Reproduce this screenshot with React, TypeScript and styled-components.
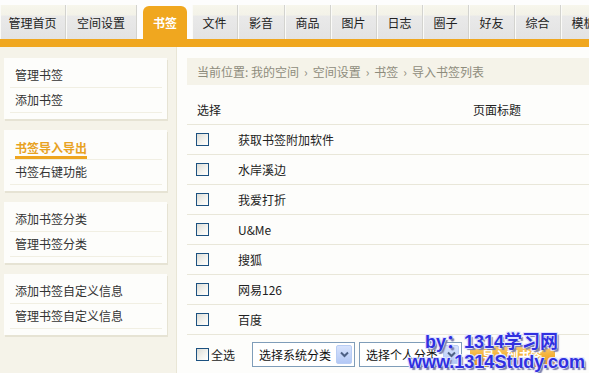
import React from "react";
import styled, { createGlobalStyle } from "styled-components";

const GlobalStyle = createGlobalStyle`
  html, body { margin: 0; padding: 0; background: #fdfdfb; }
  body {
    font-family: "Noto Sans CJK SC", "Liberation Sans", sans-serif;
    font-size: 12px;
    color: #333;
  }
  * { box-sizing: border-box; }
`;

const Page = styled.div`
  position: relative;
  width: 589px;
  height: 373px;
  overflow: hidden;
  background: #fdfdfb;
`;

const TopNav = styled.div`
  background: #fdfdfd;
  padding-top: 5px;
`;

const TabRow = styled.div`
  display: flex;
  height: 34px;
  align-items: flex-end;
`;

const Tab = styled.div<{ $w: number; $active?: boolean; $gapAfter?: number }>`
  flex: none;
  width: ${(p) => p.$w}px;
  height: ${(p) => (p.$active ? 33 : 34)}px;
  margin-right: ${(p) => p.$gapAfter ?? 0}px;
  display: flex;
  align-items: center;
  justify-content: center;
  font-size: 12px;
  line-height: 1;
  padding-top: 1px;
  color: ${(p) => (p.$active ? "#fff" : "#222")};
  font-weight: ${(p) => (p.$active ? 700 : 400)};
  white-space: nowrap;
  background: ${(p) =>
    p.$active
      ? "#f0a71f"
      : "linear-gradient(#f7f6ec 0%, #f3f2e8 30%, #e9e9e9 32%, #e3e3e3 100%)"};
  border-radius: ${(p) => (p.$active ? "6px 6px 0 0" : "0")};
  border-right: ${(p) => (p.$active ? "none" : "1px solid #d3d3cf")};
  box-shadow: ${(p) => (p.$active ? "none" : "inset 1px 0 0 #fbfbf8")};
`;

const OrangeBar = styled.div`
  height: 8px;
  background: #f0a71f;
`;

const Body = styled.div`
  display: flex;
  height: 326px;
`;

const Sidebar = styled.div`
  flex: none;
  width: 177px;
  background: #f5f3e9;
  border-right: 1px solid #e9e6d6;
  padding: 11px 9px 0 4px;
  display: flex;
  flex-direction: column;
  gap: 11px;
`;

const MenuBox = styled.div`
  background: #fdfdfb;
  padding: 5px 5px 6px 6px;
  box-shadow: 1px 2px 0 #e6e3d4;
  height: 61px;
`;

const MenuItem = styled.div`
  height: 25px;
  border-bottom: 1px solid #f1efe3;
  display: flex;
  align-items: center;
  padding-left: 5px;
`;

const MenuText = styled.span<{ $active?: boolean }>`
  color: ${(p) => (p.$active ? "#e8a21f" : "#333")};
  font-weight: ${(p) => (p.$active ? 700 : 400)};
  line-height: 1;
  ${(p) =>
    p.$active
      ? `padding-top: 4px; padding-bottom: 2px; border-bottom: 3px solid #eea520; margin-top: 2px;`
      : ""}
`;

const Main = styled.div`
  flex: 1;
  padding: 11px 0 0 10px;
  display: flex;
  flex-direction: column;
`;

const Breadcrumb = styled.div`
  height: 27px;
  background: #f5f3e9;
  color: #8e8c7c;
  display: flex;
  align-items: center;
  padding-left: 10px;
  white-space: nowrap;
`;

const Sep = styled.span`
  margin: 0 5px;
`;

const HeaderRow = styled.div`
  display: grid;
  grid-template-columns: 51px 1fr;
  height: 40px;
  padding-top: 10px;
  align-items: center;
  border-bottom: 1px solid #e9e7d9;
  color: #222;
`;

const HeadCell = styled.div<{ $pad?: number }>`
  padding-left: ${(p) => p.$pad ?? 10}px;
  white-space: nowrap;
`;

const Row = styled.div`
  display: grid;
  grid-template-columns: 51px 1fr;
  height: 30px;
  align-items: center;
  border-bottom: 1px solid #e9e7d9;
  color: #222;
`;

const CheckCell = styled.div`
  display: flex;
  align-items: center;
  height: 100%;
`;

const Box = styled.span`
  display: block;
  width: 13px;
  height: 13px;
  border: 1px solid #1c5180;
  background: linear-gradient(135deg, #dcdcd6 0%, #f4f4f0 60%, #ffffff 100%);
  margin-left: 9px;
  flex: none;
`;

const Footer = styled.div`
  display: flex;
  align-items: center;
  height: 38px;
  padding-top: 1px;
`;

const SelectAll = styled.label`
  display: flex;
  align-items: center;
  gap: 2px;
  width: 65px;
  color: #222;
`;

const Select = styled.div`
  width: 103px;
  height: 25px;
  border: 1px solid #7f9db9;
  background: #fff;
  display: flex;
  align-items: center;
  justify-content: space-between;
  padding: 0 2px 0 6px;
  margin-right: 4px;
  color: #111;
  white-space: nowrap;
`;

const DropBtn = styled.span`
  width: 16px;
  height: 19px;
  border: 1px solid #b9cdf4;
  border-radius: 2px;
  background: linear-gradient(#d7e3fd, #b3c8f5);
  display: flex;
  align-items: center;
  justify-content: center;
`;

const OrangeBtn = styled.div`
  margin-left: 4px;
  width: 85px;
  height: 22px;
  border-radius: 3px;
  background: linear-gradient(#fbd27a 0%, #f4b23a 45%, #ee9c14 100%);
  color: #fff;
  font-weight: 700;
  display: flex;
  align-items: center;
  justify-content: center;
  margin-top: 2px;
`;

const Watermark = styled.div`
  position: absolute;
  left: 408px;
  top: 332px;
  font-family: "Liberation Sans", "Noto Sans CJK SC", sans-serif;
  font-weight: 700;
  font-size: 18px;
  line-height: 20px;
  color: #3030e0;
  text-shadow: -1px -1px 0 #dfe3ff, 1px -1px 0 #dfe3ff, -1px 1px 0 #dfe3ff,
    2px 2px 1px #7b7fae;
  pointer-events: none;
  white-space: nowrap;
`;

const WLine = styled.div<{ $indent?: number }>`
  padding-left: ${(p) => p.$indent ?? 0}px;
`;

const Chevron = () => (
  <svg width="9" height="7" viewBox="0 0 9 7">
    <path d="M1 1.5 L4.5 5 L8 1.5" fill="none" stroke="#4d6185" strokeWidth="2" />
  </svg>
);

const tabs: { label: string; w: number; active?: boolean; gap?: number }[] = [
  { label: "管理首页", w: 66 },
  { label: "空间设置", w: 71, gap: 6 },
  { label: "书签", w: 44, active: true, gap: 5 },
  { label: "文件", w: 46 },
  { label: "影音", w: 47 },
  { label: "商品", w: 46 },
  { label: "图片", w: 46 },
  { label: "日志", w: 46 },
  { label: "圈子", w: 46 },
  { label: "好友", w: 46 },
  { label: "综合", w: 46 },
  { label: "模板", w: 46 },
];

const menus: { label: string; active?: boolean }[][] = [
  [{ label: "管理书签" }, { label: "添加书签" }],
  [{ label: "书签导入导出", active: true }, { label: "书签右键功能" }],
  [{ label: "添加书签分类" }, { label: "管理书签分类" }],
  [{ label: "添加书签自定义信息" }, { label: "管理书签自定义信息" }],
];

const rows = ["获取书签附加软件", "水岸溪边", "我爱打折", "U&Me", "搜狐", "网易126", "百度"];

export default function App() {
  return (
    <Page>
      <GlobalStyle />
      <TopNav>
        <TabRow>
          {tabs.map((t) => (
            <Tab key={t.label} $w={t.w} $active={t.active} $gapAfter={t.gap}>
              {t.label}
            </Tab>
          ))}
        </TabRow>
        <OrangeBar />
      </TopNav>
      <Body>
        <Sidebar>
          {menus.map((m, i) => (
            <MenuBox key={i}>
              {m.map((it) => (
                <MenuItem key={it.label}>
                  <MenuText $active={it.active}>{it.label}</MenuText>
                </MenuItem>
              ))}
            </MenuBox>
          ))}
        </Sidebar>
        <Main>
          <Breadcrumb>
            当前位置: 我的空间<Sep>›</Sep>空间设置<Sep>›</Sep>书签<Sep>›</Sep>导入书签列表
          </Breadcrumb>
          <HeaderRow>
            <HeadCell>选择</HeadCell>
            <HeadCell $pad={235}>页面标题</HeadCell>
          </HeaderRow>
          {rows.map((r) => (
            <Row key={r}>
              <CheckCell>
                <Box />
              </CheckCell>
              <div>{r}</div>
            </Row>
          ))}
          <Footer>
            <SelectAll>
              <Box />
              全选
            </SelectAll>
            <Select>
              选择系统分类
              <DropBtn>
                <Chevron />
              </DropBtn>
            </Select>
            <Select>
              选择个人分类
              <DropBtn>
                <Chevron />
              </DropBtn>
            </Select>
            <OrangeBtn>导入到书签</OrangeBtn>
          </Footer>
        </Main>
      </Body>
      <Watermark>
        <WLine $indent={17}>by：1314学习网</WLine>
        <WLine>www.1314Study.com</WLine>
      </Watermark>
    </Page>
  );
}
